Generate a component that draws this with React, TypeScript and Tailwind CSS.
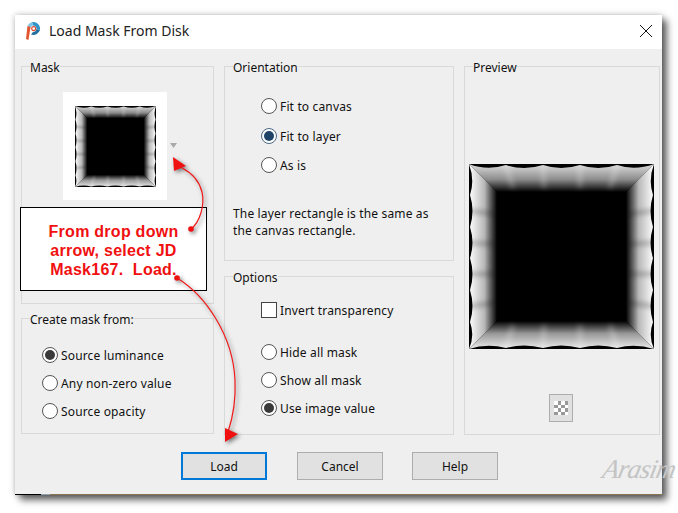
import React from "react";

const F = { fontFamily: '"Noto Sans", "Open Sans", sans-serif' };

function MaskArt({ id, className }: { id: string; className: string }) {
  const top = "M0 0 Q18 7 37 1 Q55 7 74 1 Q92 7 111 1 Q129 7 148 1 Q166 7 185 0";
  const outer =
    top +
    " Q179 16 184 31 Q179 47 184 63 Q179 79 184 94 Q179 110 184 126 Q179 142 184 158 Q179 172 185 185" +
    " Q166 179 148 184 Q129 179 111 184 Q92 179 74 184 Q55 179 37 184 Q18 179 0 185" +
    " Q6 172 1 158 Q6 142 1 126 Q6 110 1 94 Q6 79 1 63 Q6 47 1 31 Q6 16 0 0Z";
  return (
    <svg viewBox="0 0 185 185" className={className}>
      <defs>
        <clipPath id={id + "c"}><path d={outer} /></clipPath>
        <filter id={id + "f"} x="-20%" y="-20%" width="140%" height="140%"><feGaussianBlur stdDeviation="2.5" /></filter>
        <linearGradient id={id + "t"} x1="0" y1="0" x2="0" y2="1">
          <stop offset="0" stopColor="#dcdcdc" /><stop offset="0.55" stopColor="#8c8c8c" /><stop offset="1" stopColor="#000" />
        </linearGradient>
        <linearGradient id={id + "b"} x1="0" y1="1" x2="0" y2="0">
          <stop offset="0" stopColor="#ececec" /><stop offset="0.55" stopColor="#989898" /><stop offset="1" stopColor="#000" />
        </linearGradient>
        <linearGradient id={id + "l"} x1="0" y1="0" x2="1" y2="0">
          <stop offset="0" stopColor="#fff" /><stop offset="0.55" stopColor="#b8b8b8" /><stop offset="1" stopColor="#000" />
        </linearGradient>
        <linearGradient id={id + "r"} x1="1" y1="0" x2="0" y2="0">
          <stop offset="0" stopColor="#fff" /><stop offset="0.55" stopColor="#b8b8b8" /><stop offset="1" stopColor="#000" />
        </linearGradient>
      </defs>
      <rect width="185" height="185" fill="#000" />
      <g clipPath={`url(#${id}c)`}>
        <polygon points="0,0 185,0 157,28 28,28" fill={`url(#${id}t)`} />
        <polygon points="0,185 185,185 157,157 28,157" fill={`url(#${id}b)`} />
        <polygon points="0,0 28,28 28,157 0,185" fill={`url(#${id}l)`} />
        <polygon points="185,0 157,28 157,157 185,185" fill={`url(#${id}r)`} />
        <g stroke="#fff" strokeOpacity="0.22" strokeWidth="5" fill="none" filter={`url(#${id}f)`}>
          <path d="M37 1 L44 24M74 1 L75 24M111 1 L111 24M148 1 L141 24" />
          <path d="M37 184 L44 161M74 184 L75 161M111 184 L111 161M148 184 L141 161" />
        </g>
        <g stroke="#000" strokeOpacity="0.22" strokeWidth="5" fill="none" filter={`url(#${id}f)`}>
          <path d="M1 47 L26 50M1 79 L26 80M1 110 L26 110M1 142 L26 139" />
          <path d="M184 47 L159 50M184 79 L159 80M184 110 L159 110M184 142 L159 139" />
        </g>
      </g>
    </svg>
  );
}

function Radio({ label, state }: { label: string; state?: "gray" | "blue" }) {
  return (
    <div className="flex h-[28px] items-center gap-[3px]">
      <span
        className={
          "flex h-4 w-4 shrink-0 items-center justify-center rounded-full border bg-white " +
          (state === "blue" ? "border-[#4a6a85]" : "border-[#555555]")
        }
      >
        {state && (
          <span className={"h-[10px] w-[10px] rounded-full " + (state === "blue" ? "bg-[#1f4468]" : "bg-[#3a3a3a]")} />
        )}
      </span>
      <span className="mt-[2px] text-[12px] tracking-[0.15px] text-[#111]">{label}</span>
    </div>
  );
}

function Group({ title, className, children }: { title: string; className: string; children?: React.ReactNode }) {
  return (
    <fieldset className={"border border-[#d9d9d9] " + className}>
      <legend className="ml-[8px] pt-[4px] text-[12px] leading-[18px] text-[#111]">{title}</legend>
      {children}
    </fieldset>
  );
}

function Btn({ label, primary, className = "" }: { label: string; primary?: boolean; className?: string }) {
  return (
    <button
      className={
        "h-[28px] w-[86px] bg-[#e1e1e1] pt-[1px] text-[12px] text-[#111] " +
        (primary ? "border-2 border-[#0078d7] " : "border border-[#adadad] ") +
        className
      }
    >
      {label}
    </button>
  );
}

export default function App() {
  return (
    <div className="relative h-[513px] w-[678px] overflow-hidden bg-white pl-[15px] pt-[15px]" style={F}>
      <div className="flex h-[480px] w-[647px] flex-col bg-[#efefef] shadow-[5px_5px_7px_rgba(0,0,0,0.6),0_0_6px_rgba(0,0,0,0.25)]">
        <div className="flex h-[34px] shrink-0 items-center bg-white pb-[3px] pl-[10px] pr-[10px]">
          <svg viewBox="0 0 16 20" className="h-[20px] w-[16px]">
            <path d="M7 1 A7 7 0 0 1 15 9 L11.5 8 A3.6 3.6 0 0 0 8 4.5Z" fill="#2f95c9" />
            <path d="M15 9 A7 7 0 0 1 6 13.5 L8 11 A3.6 3.6 0 0 0 11.5 8Z" fill="#1f6f9f" />
            <path d="M7 1 A7 7 0 0 0 2.5 5 L5.5 6.5 A3.6 3.6 0 0 1 8 4.5Z" fill="#7cc5e3" />
            <path d="M2.5 5 L5.5 6 L3.5 19 L1 18Z" fill="#e2552c" />
            <circle cx="8.7" cy="7.6" r="2" fill="none" stroke="#d9482b" strokeWidth="1.1" />
          </svg>
          <span className="ml-[8px] text-[14px] text-[#222]">Load Mask From Disk</span>
          <svg viewBox="0 0 12 12" className="ml-auto h-[12px] w-[12px]" fill="none" stroke="#111" strokeWidth="1">
            <path d="M0 0 L12 12 M12 0 L0 12" />
          </svg>
        </div>

        <div className="flex gap-[10px] pl-[6px] pt-[6px]">
          <div className="flex w-[193px] flex-col gap-[3px]">
            <Group title="Mask" className="h-[249px]">
              <div className="mt-[15px] flex items-center pl-[41px]">
                <div className="flex h-[108px] w-[104px] items-center justify-center bg-white">
                  <MaskArt id="a" className="h-[81px] w-[81px]" />
                </div>
                <svg viewBox="0 0 7 5" className="ml-[3px] mt-[-1px] h-[5px] w-[7px]"><path d="M0 0H7L3.5 5Z" fill="#aaa" /></svg>
              </div>
            </Group>
            <Group title="Create mask from:" className="h-[127px]">
              <div className="flex flex-col pl-[20px] pt-[12px]">
                <Radio label="Source luminance" state="gray" />
                <Radio label="Any non-zero value" />
                <Radio label="Source opacity" />
              </div>
            </Group>
          </div>

          <div className="flex w-[230px] flex-col gap-[4px]">
            <Group title="Orientation" className="h-[206px]">
              <div className="flex flex-col pl-[36px] pt-[15px]">
                <Radio label="Fit to canvas" />
                <div className="h-[2px]" />
                <Radio label="Fit to layer" state="blue" />
                <div className="h-[1px]" />
                <Radio label="As is" />
              </div>
              <p className="mt-[26px] pl-[8px] text-[12px] leading-[17px] tracking-[0.15px] text-[#111]">
                The layer rectangle is the same as
                <br />
                the canvas rectangle.
              </p>
            </Group>
            <Group title="Options" className="h-[170px]">
              <div className="flex flex-col pl-[36px] pt-[9px]">
                <div className="flex h-[28px] items-center gap-[3px]">
                  <span className="h-4 w-4 shrink-0 border border-[#444] bg-white" />
                  <span className="mt-[2px] text-[12px] tracking-[0.15px] text-[#111]">Invert transparency</span>
                </div>
                <div className="h-[14px]" />
                <Radio label="Hide all mask" />
                <Radio label="Show all mask" />
                <Radio label="Use image value" state="gray" />
              </div>
            </Group>
          </div>

          <Group title="Preview" className="flex h-[380px] w-[196px] flex-col items-center">
            <MaskArt id="b" className="ml-[-1px] mt-[87px] h-[185px] w-[185px]" />
            <div className="ml-[-2px] mt-[45px] flex h-[28px] w-[24px] items-center justify-center border border-[#adadad] bg-[#e1e1e1]">
              <div className="grid h-[14px] w-[14px] grid-cols-4 grid-rows-4 bg-white">
                <i /><i className="bg-[#999]" /><i /><i className="bg-[#999]" />
                <i className="bg-[#999]" /><i /><i className="bg-[#999]" /><i />
                <i /><i className="bg-[#999]" /><i /><i className="bg-[#999]" />
                <i className="bg-[#999]" /><i /><i className="bg-[#999]" /><i />
              </div>
            </div>
          </Group>
        </div>

        <div className="flex pl-[166px] pt-[17px]">
          <Btn label="Load" primary />
          <Btn label="Cancel" className="ml-[30px]" />
          <Btn label="Help" className="ml-[29px]" />
        </div>

        <div className="mt-auto flex h-[1px] shrink-0">
          <div className="w-[26px] bg-black" />
          <div className="w-[9px] bg-[#8fa3b0]" />
          <div className="flex-1 bg-[#8a7550]" />
        </div>
      </div>

      <span
        className="absolute left-[603px] top-[449px] -skew-x-12 text-[27px] italic tracking-[-1px] text-[#c4c4c4]"
        style={{ fontFamily: '"Liberation Serif", serif' }}
      >
        Arasim
      </span>

      <div
        className="absolute left-[20px] top-[207px] flex h-[84px] w-[187px] items-center justify-center border border-black bg-white pt-[2px] text-center text-[16px] font-bold leading-[19px] tracking-[0.26px] text-[#f01010]"
        style={{ fontFamily: '"Liberation Sans", sans-serif' }}
      >
        <div>
          From drop down
          <br />
          arrow, select JD
          <br />
          Mask167.&nbsp; Load.
        </div>
      </div>

      <svg className="absolute left-0 top-0 h-[513px] w-[678px] drop-shadow-[2px_2px_2px_rgba(0,0,0,0.5)]" viewBox="0 0 678 513" fill="none">
        <path d="M191 229 C200 222 205 205 202 192 C199 180 192 173 182 168" stroke="#f01818" strokeWidth="1.2" />
        <polygon points="173,157 174,171 186,166" fill="#f01010" />
        <circle cx="191" cy="229" r="2.8" fill="#f01010" />
        <path d="M177 278 C205 295 233 335 235 380 C236 400 232 420 228 432" stroke="#f01818" strokeWidth="1.2" />
        <polygon points="225,442 225,428 238,434" fill="#f01010" />
        <circle cx="177" cy="278" r="2.8" fill="#f01010" />
      </svg>
    </div>
  );
}
